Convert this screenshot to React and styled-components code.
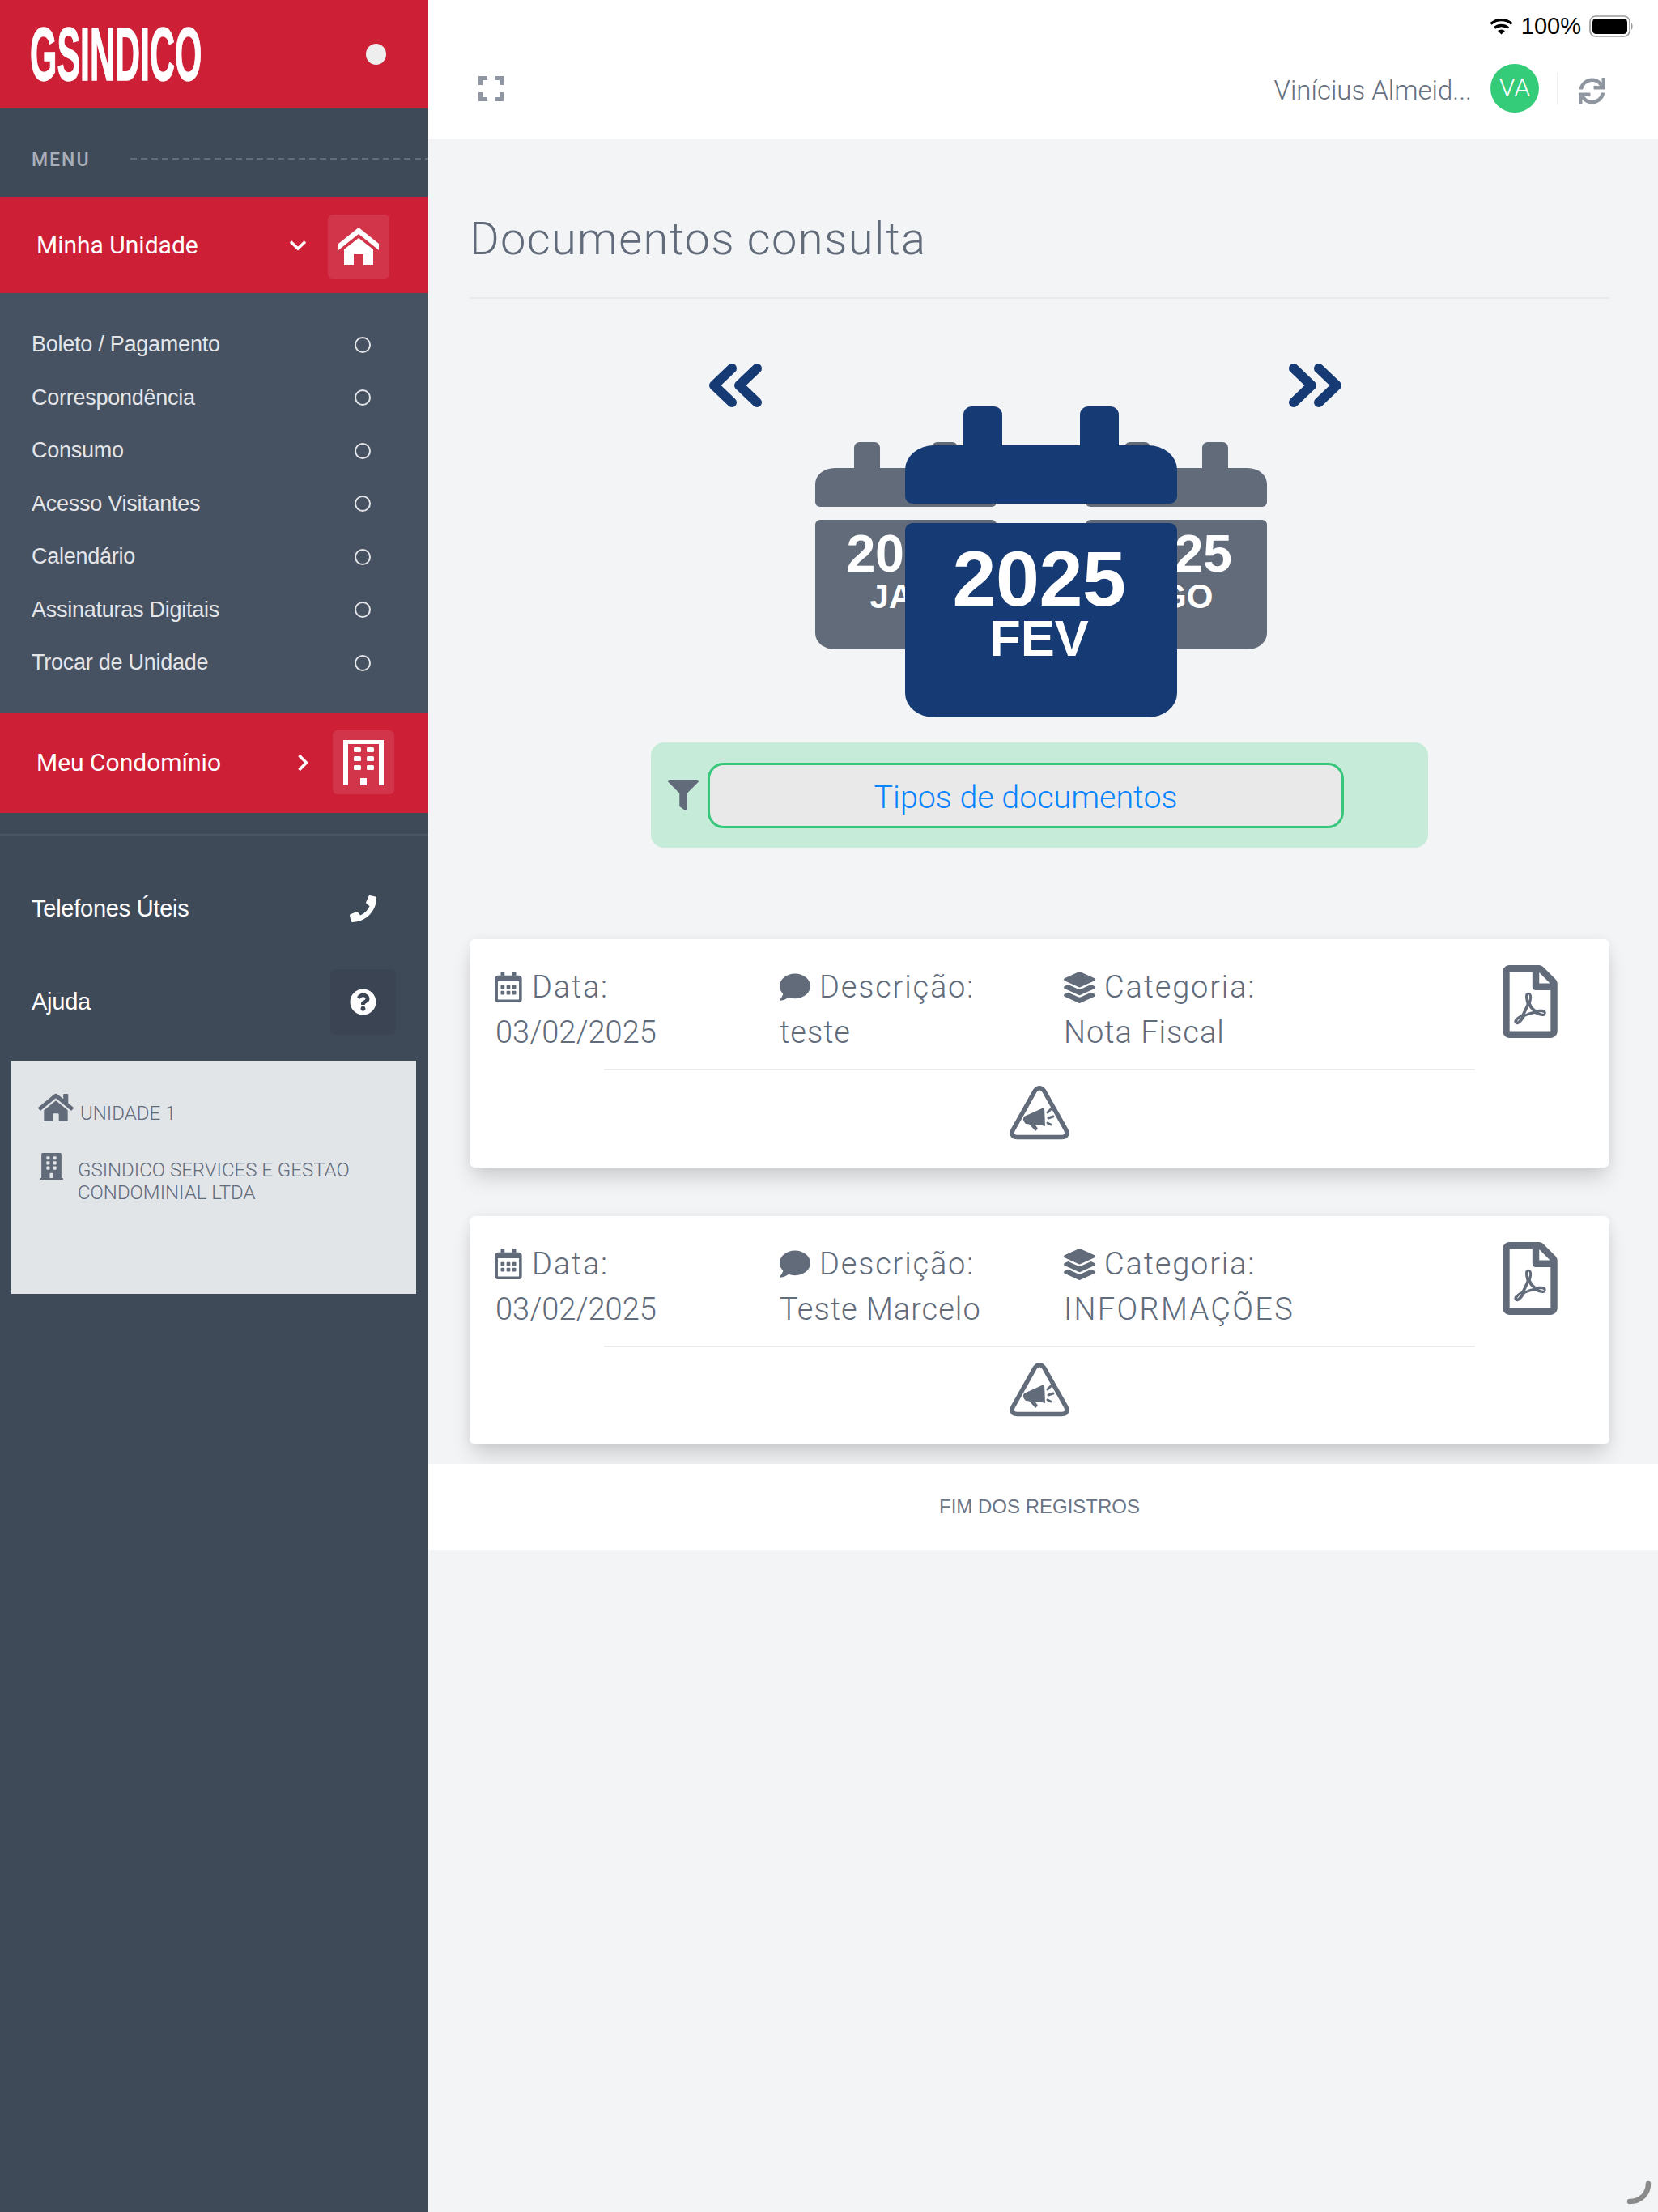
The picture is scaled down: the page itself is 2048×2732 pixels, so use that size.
import React from 'react'
import styled, { createGlobalStyle } from 'styled-components'
import {
  FaPhone, FaQuestionCircle, FaSync, FaFilter,
  FaRegCalendarAlt, FaComment, FaLayerGroup, FaRegFilePdf, FaHome, FaBuilding
} from 'react-icons/fa'

const GlobalStyle = createGlobalStyle`
  html, body {
    margin: 0;
    padding: 0;
    background: #f3f4f6;
  }
  body {
    font-family: Roboto, "Liberation Sans", sans-serif;
    overflow: hidden;
  }
  * {
    box-sizing: border-box;
  }
`

const red = '#cd1f36'
const slate = '#626b7a'
const navy = '#163a73'

const Page = styled.div`
  display: flex;
  width: 2048px;
  height: 2732px;
  position: relative;
`

/* sidebar */
const Sidebar = styled.aside`
  width: 529px;
  flex-shrink: 0;
  background: #3f4a59;
  display: flex;
  flex-direction: column;
`
const Brand = styled.div`
  height: 134px;
  background: ${red};
  display: flex;
  align-items: center;
  justify-content: space-between;
  padding: 0 52px 0 37px;
`
const Logo = styled.span`
  font-family: "Liberation Sans", sans-serif;
  font-weight: 700;
  font-size: 92px;
  line-height: 1;
  color: #fff;
  -webkit-text-stroke: 1.5px #fff;
  display: inline-block;
  width: 211px;
  white-space: nowrap;
  transform: scaleX(0.467);
  transform-origin: left center;
`
const Dot = styled.span`
  width: 25px;
  height: 26px;
  border-radius: 50%;
  background: #eeeeee;
`
const MenuLabel = styled.div`
  height: 109px;
  padding: 17px 0 0 39px;
  display: flex;
  align-items: center;
  gap: 50px;
  font-size: 23px;
  font-weight: 500;
  letter-spacing: 2px;
  color: #a9afb8;
  &::after {
    content: '';
    flex: 1;
    height: 2px;
    margin-top: -3px;
    background: repeating-linear-gradient(90deg, #636d7a 0 8px, transparent 8px 13px);
  }
`
const RedRow = styled.div`
  height: ${p => p.$height}px;
  background: ${red};
  display: flex;
  align-items: center;
  padding: 0 ${p => p.$right}px 0 45px;
  color: #fff;
  font-size: 30px;
`
const RowText = styled.span`
  flex: 1;
`
const IconBox = styled.span`
  width: 76px;
  height: 79px;
  margin: ${p => p.$shift}px 0 0 ${p => p.$left}px;
  border-radius: 6px;
  background: rgba(255, 255, 255, 0.1);
  display: flex;
  align-items: center;
  justify-content: center;
`
const SubMenu = styled.ul`
  list-style: none;
  margin: 0;
  padding: 31px 0 28px;
  background: #465161;
`
const SubItem = styled.li`
  height: 65.5px;
  display: flex;
  align-items: center;
  justify-content: space-between;
  padding: 0 71px 0 39px;
  font-family: "Liberation Sans", sans-serif;
  font-size: 27px;
  letter-spacing: -0.25px;
  color: #e3e5e8;
  &::after {
    content: '';
    width: 16px;
    height: 16px;
    border: 2px solid #e3e5e8;
    border-radius: 50%;
  }
`
const SideDivider = styled.div`
  height: 2px;
  margin-top: 26px;
  background: #4a5564;
`
const PlainRow = styled.div`
  height: 81px;
  margin-top: ${p => p.$top}px;
  display: flex;
  align-items: center;
  justify-content: space-between;
  padding: 0 40px 0 39px;
  font-family: "Liberation Sans", sans-serif;
  font-size: 29px;
  letter-spacing: -0.25px;
  color: #fff;
`
const PlainIcon = styled.span`
  width: 81px;
  height: 81px;
  border-radius: 6px;
  background: ${p => (p.$filled ? '#3a4452' : 'transparent')};
  display: flex;
  align-items: center;
  justify-content: center;
`
const UnitPanel = styled.div`
  height: 288px;
  margin: 32px 15px 0 14px;
  background: #e2e5e8;
  padding: 36px 33px;
  color: #626b7a;
  font-size: 24px;
  font-weight: 300;
`
const UnitLine = styled.div`
  display: flex;
  align-items: ${p => (p.$top ? 'flex-start' : 'center')};
  gap: ${p => p.$gap}px;
  margin-bottom: 34px;
  line-height: 28px;
`
const UnitText = styled.span`
  padding-top: ${p => p.$top}px;
`

/* main */
const Main = styled.main`
  flex: 1;
  display: flex;
  flex-direction: column;
`
const TopBar = styled.header`
  height: 172px;
  background: #fff;
`
const StatusBar = styled.div`
  height: 46px;
  padding: 17px 30px 0 0;
  display: flex;
  justify-content: flex-end;
  align-items: flex-start;
  gap: 10px;
  font-family: "Liberation Sans", sans-serif;
  font-size: 29px;
  line-height: 30px;
  color: #000;
`
const StatusIcon = styled.svg`
  margin-top: ${p => p.$top}px;
`
const Toolbar = styled.div`
  height: 126px;
  display: flex;
  align-items: center;
  padding: 0 65px 0 62px;
`
const UserName = styled.span`
  margin-left: auto;
  padding-top: 4px;
  font-size: 33px;
  font-weight: 300;
  color: #667080;
`
const Avatar = styled.span`
  width: 60px;
  height: 60px;
  margin-left: 23px;
  padding-bottom: 3px;
  border-radius: 50%;
  background: #34cb79;
  color: #fff;
  font-size: 32px;
  font-weight: 300;
  display: flex;
  align-items: center;
  justify-content: center;
`
const ToolSep = styled.span`
  width: 2px;
  height: 40px;
  margin: 0 25px 0 22px;
  background: #eef0f2;
`
const RefreshIcon = styled(FaSync)`
  margin-top: 6px;
  font-size: 33px;
  color: #9096a0;
`
const Content = styled.div`
  padding: 0 60px 0 51px;
`
const Title = styled.h1`
  height: 197px;
  margin: 0;
  padding-top: 92px;
  border-bottom: 2px solid #e9ebee;
  font-size: 56px;
  line-height: 62px;
  font-weight: 300;
  letter-spacing: 1.35px;
  color: #626b7a;
`
const Stage = styled.div`
  display: grid;
  height: 437px;
  margin-top: 80px;
  > * {
    grid-area: 1 / 1;
    justify-self: start;
    align-self: start;
  }
`
const Arrows = styled.div`
  width: 783px;
  margin-left: 295px;
  display: flex;
  justify-content: space-between;
`
const ArrowIcon = styled.svg`
  transform: ${p => (p.$flip ? 'scaleX(-1)' : 'none')};
`
const Deck = styled.div`
  width: 558px;
  margin-left: 427px;
  display: grid;
  > * {
    grid-area: 1 / 1;
  }
`
const Calendar = styled.div`
  justify-self: ${p => (p.$side === 'left' ? 'start' : p.$side === 'right' ? 'end' : 'center')};
  margin-top: ${p => (p.$side ? 97 : 53)}px;
  width: ${p => (p.$side ? 224 : 336)}px;
  --u: ${p => (p.$side ? 0.6667 : 1)};
  --tone: ${p => (p.$side ? slate : navy)};
  --pad: ${p => (p.$side ? 10 : 21)}px;
  --month-gap: ${p => (p.$side ? 0 : -7)}px;
  color: #fff;
  text-align: center;
  font-family: "Liberation Sans", sans-serif;
  font-weight: 700;
`
const CalTabs = styled.div`
  height: calc(48px * var(--u));
  padding: 0 calc(72px * var(--u));
  display: flex;
  justify-content: space-between;
  &::before, &::after {
    content: '';
    width: calc(48px * var(--u));
    background: var(--tone);
    border-radius: calc(10px * var(--u)) calc(10px * var(--u)) 0 0;
  }
`
const CalHead = styled.div`
  height: calc(72px * var(--u));
  margin-bottom: calc(24px * var(--u));
  background: var(--tone);
  border-radius: calc(36px * var(--u)) calc(36px * var(--u)) calc(9px * var(--u)) calc(9px * var(--u)) / calc(30px * var(--u)) calc(30px * var(--u)) calc(9px * var(--u)) calc(9px * var(--u));
`
const CalBody = styled.div`
  height: calc(240px * var(--u));
  padding: var(--pad) 5px 0 0;
  background: var(--tone);
  border-radius: calc(9px * var(--u)) calc(9px * var(--u)) calc(36px * var(--u)) calc(36px * var(--u)) / calc(9px * var(--u)) calc(9px * var(--u)) calc(30px * var(--u)) calc(30px * var(--u));
`
const CalYear = styled.div`
  font-size: calc(97px * var(--u));
  line-height: calc(96px * var(--u));
  letter-spacing: -0.5px;
`
const CalMonth = styled.div`
  font-size: calc(63px * var(--u));
  line-height: calc(64px * var(--u));
  margin-top: var(--month-gap);
`
const FilterBar = styled.div`
  width: 960px;
  height: 130px;
  margin: 31px 0 0 224px;
  padding: 0 0 0 21px;
  background: #c6ecd9;
  border-radius: 16px;
  display: flex;
  align-items: center;
  gap: 11px;
`
const SelectBox = styled.div`
  width: 786px;
  height: 81px;
  padding-top: 4px;
  background: #e9e9e9;
  border: 3px solid #36c77a;
  border-radius: 20px;
  display: flex;
  align-items: center;
  justify-content: center;
  font-size: 39.4px;
  font-weight: 300;
  color: #0a84ff;
`
const Card = styled.section`
  height: 282px;
  margin-top: ${p => p.$top}px;
  background: #fff;
  border-radius: 7px;
  box-shadow: 0 16px 26px -4px rgba(0, 0, 0, 0.16), 0 0 14px rgba(0, 0, 0, 0.05);
  display: flex;
  flex-direction: column;
  align-items: center;
`
const CardFields = styled.div`
  width: 100%;
  height: 160px;
  padding: 32px 53px 0 32px;
  display: flex;
`
const Field = styled.div`
  width: 351px;
  padding-top: 5px;
  font-size: 38px;
  font-weight: 300;
  color: #626b7a;
`
const FieldLabel = styled.div`
  height: 44px;
  display: flex;
  align-items: center;
  gap: ${p => p.$gap}px;
  letter-spacing: 1.8px;
`
const DateIcon = styled(FaRegCalendarAlt)`
  margin-left: -3px;
`
const FieldValue = styled.div`
  margin-top: 12px;
  line-height: 44px;
  letter-spacing: ${p => p.$spacing}px;
  white-space: nowrap;
`
const PdfIcon = styled(FaRegFilePdf)`
  margin-left: auto;
  font-size: 90px;
  color: #626b7a;
`
const CardDivider = styled.div`
  width: 1076px;
  height: 2px;
  background: #e9e9e9;
`
const NoticeIcon = styled.svg`
  margin-top: 19px;
`
const EndBand = styled.div`
  height: 106px;
  margin-top: 24px;
  padding-right: 9px;
  background: #fff;
  display: flex;
  align-items: center;
  justify-content: center;
  font-family: "Liberation Sans", sans-serif;
  font-size: 24px;
  color: #6b7585;
`
const Spinner = styled.svg`
  position: absolute;
  right: 0;
  bottom: 0;
`

const RoofHome = () => (
  <svg width="50" height="46" viewBox="0 0 50 46" fill="#fff">
    <path d="M25 0 L50 20 V28 L25 8 L0 28 V20 Z" />
    <path d="M25 13 L43 27 V46 H31 V33 H19 V46 H7 V27 Z" />
  </svg>
)

const FrameBuilding = () => (
  <svg width="50" height="56" viewBox="0 0 50 56" fill="#fff">
    <path d="M0 0 H50 V56 H44 V5 H6 V56 H0 Z" />
    <rect x="13" y="9" width="9" height="6" rx="1.5" />
    <rect x="29" y="9" width="9" height="6" rx="1.5" />
    <rect x="13" y="20" width="9" height="6" rx="1.5" />
    <rect x="29" y="20" width="9" height="6" rx="1.5" />
    <rect x="13" y="31" width="9" height="6" rx="1.5" />
    <rect x="29" y="31" width="9" height="6" rx="1.5" />
    <rect x="21" y="47" width="8" height="9" />
  </svg>
)

const ChevronDown = () => (
  <svg width="22" height="14" viewBox="0 0 22 14" fill="none" stroke="#fff" strokeWidth="3.6">
    <path d="M2 2.5 L11 11 L20 2.5" />
  </svg>
)

const ChevronRight = () => (
  <svg width="14" height="22" viewBox="0 0 14 22" fill="none" stroke="#fff" strokeWidth="3.6">
    <path d="M2.5 2 L11.5 11 L2.5 20" />
  </svg>
)

const Fullscreen = () => (
  <svg width="31" height="31" viewBox="0 0 31 31" fill="none" stroke="#9097a3" strokeWidth="5">
    <path d="M2.5 11 V2.5 H11 M20 2.5 H28.5 V11 M28.5 20 V28.5 H20 M11 28.5 H2.5 V20" />
  </svg>
)

const Wifi = () => (
  <StatusIcon $top={5} width="29" height="22" viewBox="0 0 29 22" fill="none" stroke="#000" strokeWidth="3.4">
    <path d="M1.5 7.5 C9 1 20 1 27.5 7.5" />
    <path d="M6 12.5 C11 8.5 18 8.5 23 12.5" />
    <path d="M14.5 20.5 L10 16 C13 14 16 14 19 16 Z" fill="#000" stroke="none" />
  </StatusIcon>
)

const Battery = () => (
  <StatusIcon $top={2} width="55" height="27" viewBox="0 0 55 27">
    <rect x="1" y="1" width="49" height="25" rx="7" fill="none" stroke="#9a9a9a" strokeWidth="1.6" />
    <rect x="4" y="4" width="43" height="19" rx="4.5" fill="#000" />
    <path d="M52 9 C54 10 54 17 52 18 Z" fill="#9a9a9a" />
  </StatusIcon>
)

const Chevrons = ({ flip }) => (
  <ArrowIcon $flip={flip} width="67" height="54" viewBox="0 0 67 54" fill="none" stroke={navy} strokeWidth="12" strokeLinecap="round" strokeLinejoin="round">
    <path d="M29 6 L7 27 L29 48" />
    <path d="M60 6 L38 27 L60 48" />
  </ArrowIcon>
)

const Notice = () => (
  <NoticeIcon width="74" height="67" viewBox="0 0 74 67" fill="none">
    <path d="M31.5 6 Q37 -0.5 42.5 6 L70 55 Q73 63.5 64 63.5 H10 Q1 63.5 4 55 Z" stroke={slate} strokeWidth="5.5" />
    <g fill={slate}>
      <path d="M18 38 L40 28 L43 27 L44 50 L40 49 L20 47 Q15 43 18 38 Z" />
      <path d="M24 47 L31 47 L35 53 L32 56 Z" />
    </g>
    <g stroke={slate} strokeWidth="3" strokeLinecap="round">
      <path d="M47 33 L51 29" />
      <path d="M48 40 L54 38" />
      <path d="M47 46 L51 48" />
    </g>
  </NoticeIcon>
)

const subItems = ['Boleto / Pagamento', 'Correspondência', 'Consumo', 'Acesso Visitantes', 'Calendário', 'Assinaturas Digitais', 'Trocar de Unidade']

const documents = [
  { date: '03/02/2025', description: 'teste', category: 'Nota Fiscal', categorySpacing: 1, top: 113 },
  { date: '03/02/2025', description: 'Teste Marcelo', category: 'INFORMAÇÕES', categorySpacing: 2.3, top: 60 }
]

const DocumentCard = ({ date, description, category, categorySpacing, top }) => (
  <Card $top={top}>
    <CardFields>
      <Field>
        <FieldLabel $gap={10}><DateIcon size={38} />Data:</FieldLabel>
        <FieldValue $spacing={0}>{date}</FieldValue>
      </Field>
      <Field>
        <FieldLabel $gap={11}><FaComment size={38} />Descrição:</FieldLabel>
        <FieldValue $spacing={1}>{description}</FieldValue>
      </Field>
      <Field>
        <FieldLabel $gap={11}><FaLayerGroup size={39} />Categoria:</FieldLabel>
        <FieldValue $spacing={categorySpacing}>{category}</FieldValue>
      </Field>
      <PdfIcon />
    </CardFields>
    <CardDivider />
    <Notice />
  </Card>
)

const MonthCalendar = ({ side, year, month }) => (
  <Calendar $side={side}>
    <CalTabs />
    <CalHead />
    <CalBody>
      <CalYear>{year}</CalYear>
      <CalMonth>{month}</CalMonth>
    </CalBody>
  </Calendar>
)

export default function App() {
  return (
    <Page>
      <GlobalStyle />
      <Sidebar>
        <Brand>
          <Logo>GSINDICO</Logo>
          <Dot />
        </Brand>
        <MenuLabel>MENU</MenuLabel>
        <RedRow $height={119} $right={48}>
          <RowText>Minha Unidade</RowText>
          <ChevronDown />
          <IconBox $shift={3} $left={26}><RoofHome /></IconBox>
        </RedRow>
        <SubMenu>
          {subItems.map(item => <SubItem key={item}>{item}</SubItem>)}
        </SubMenu>
        <RedRow $height={124} $right={42}>
          <RowText>Meu Condomínio</RowText>
          <ChevronRight />
          <IconBox $shift={0} $left={30}><FrameBuilding /></IconBox>
        </RedRow>
        <SideDivider />
        <PlainRow $top={50}>
          Telefones Úteis
          <PlainIcon><FaPhone size={33} /></PlainIcon>
        </PlainRow>
        <PlainRow $top={34}>
          Ajuda
          <PlainIcon $filled><FaQuestionCircle size={33} /></PlainIcon>
        </PlainRow>
        <UnitPanel>
          <UnitLine $gap={8}><FaHome size={44} /><UnitText $top={14}>UNIDADE 1</UnitText></UnitLine>
          <UnitLine $top $gap={16}>
            <FaBuilding size={33} />
            <UnitText $top={7}>GSINDICO SERVICES E GESTAO<br />CONDOMINIAL LTDA</UnitText>
          </UnitLine>
        </UnitPanel>
      </Sidebar>
      <Main>
        <TopBar>
          <StatusBar>
            <Wifi />
            <span>100%</span>
            <Battery />
          </StatusBar>
          <Toolbar>
            <Fullscreen />
            <UserName>Vinícius Almeid...</UserName>
            <Avatar>VA</Avatar>
            <ToolSep />
            <RefreshIcon />
          </Toolbar>
        </TopBar>
        <Content>
          <Title>Documentos consulta</Title>
          <Stage>
            <Arrows>
              <Chevrons />
              <Chevrons flip />
            </Arrows>
            <Deck>
              <MonthCalendar side="left" year="2025" month="JAN" />
              <MonthCalendar side="right" year="2025" month="AGO" />
              <MonthCalendar year="2025" month="FEV" />
            </Deck>
          </Stage>
          <FilterBar>
            <FaFilter size={38} color={slate} />
            <SelectBox>Tipos de documentos</SelectBox>
          </FilterBar>
          {documents.map((doc, i) => <DocumentCard key={i} {...doc} />)}
        </Content>
        <EndBand>FIM DOS REGISTROS</EndBand>
      </Main>
      <Spinner width="88" height="92" viewBox="0 0 88 92" fill="none">
        <path d="M53 79 C66 79 76 70 76 57" stroke="#8a8a8a" strokeWidth="6.5" strokeLinecap="round" />
      </Spinner>
    </Page>
  )
}
